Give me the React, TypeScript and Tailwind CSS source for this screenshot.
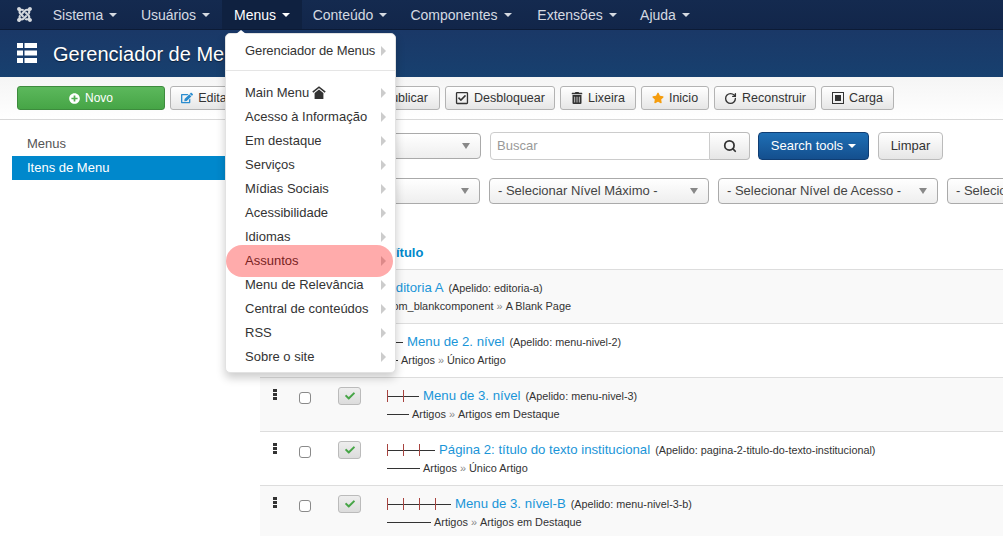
import type { ReactNode } from 'react'
import { FaJoomla, FaPlusCircle, FaRegCheckSquare, FaTrashAlt, FaStar, FaCheck, FaEdit } from 'react-icons/fa'
import { RotateCw, Search } from 'lucide-react'

const navItems = [
  { label: 'Sistema', w: 'w-[88px]' },
  { label: 'Usuários', w: 'w-[93px]' },
  { label: 'Menus', w: 'w-[80px]' },
  { label: 'Conteúdo', w: 'w-[96px]' },
  { label: 'Componentes', w: 'w-[126px]' },
  { label: 'Extensões', w: 'w-[106px]' },
  { label: 'Ajuda', w: 'w-[70px]' },
]

const menuItems = [
  'Acesso à Informação',
  'Em destaque',
  'Serviços',
  'Mídias Sociais',
  'Acessibilidade',
  'Idiomas',
  'Assuntos',
  'Menu de Relevância',
  'Central de conteúdos',
  'RSS',
  'Sobre o site',
]

const rows = [
  { pipes: 0, dash: 0, title: 'Editoria A', alias: 'editoria-a', type: ['com_blankcomponent', 'A Blank Page'], bg: 'bg-[#f9f9f9]' },
  { pipes: 1, dash: 11, title: 'Menu de 2. nível', alias: 'menu-nivel-2', type: ['Artigos', 'Único Artigo'], bg: 'bg-white' },
  { pipes: 2, dash: 22, title: 'Menu de 3. nível', alias: 'menu-nivel-3', type: ['Artigos', 'Artigos em Destaque'], bg: 'bg-[#f9f9f9]' },
  { pipes: 3, dash: 33, title: 'Página 2: título do texto institucional', alias: 'pagina-2-titulo-do-texto-institucional', type: ['Artigos', 'Único Artigo'], bg: 'bg-white' },
  { pipes: 4, dash: 44, title: 'Menu de 3. nível-B', alias: 'menu-nivel-3-b', type: ['Artigos', 'Artigos em Destaque'], bg: 'bg-[#f9f9f9]' },
]

function Caret({ className }: { className: string }) {
  return <span className={`inline-block w-0 h-0 border-x-[4px] border-x-transparent border-t-[4px] ${className}`} />
}

function MenuArrow() {
  return <span className="w-0 h-0 border-y-[5px] border-y-transparent border-l-[5px] border-l-[#ccc]" />
}

function ToolButton({ w, icon, label }: { w: string; icon: ReactNode; label: string }) {
  return (
    <button className={`${w} h-6 flex items-center justify-center gap-[5px] rounded-[3px] border border-[#b3b3b3] bg-gradient-to-b from-white to-[#e6e6e6] text-[12.5px] text-[#333]`}>
      {icon}
      {label}
    </button>
  )
}

function Select({ w, label }: { w: string; label: string }) {
  return (
    <div className={`${w} shrink-0 h-[26px] flex items-center justify-between pl-[8px] pr-[10px] rounded-[4px] border border-[#aaa] bg-gradient-to-b from-white to-[#eee] text-[13px] text-[#444] whitespace-nowrap overflow-hidden`}>
      <span>{label}</span>
      <span className="ml-2 w-0 h-0 border-x-[4px] border-x-transparent border-t-[6px] border-t-[#888]" />
    </div>
  )
}

function Level({ pipes }: { pipes: number }) {
  if (pipes === 0) return null
  return (
    <span className="inline-flex items-center h-[13px] mr-[4px]">
      {Array.from({ length: pipes }).map((_, i) => (
        <span key={i} className="flex items-center">
          <span className="w-px h-[12px] bg-[#a8433f]" />
          <span className="w-[15px] h-px bg-[#333]" />
        </span>
      ))}
    </span>
  )
}

export default function App() {
  return (
    <div className="relative w-[1003px] h-[536px] overflow-hidden bg-white font-['Liberation_Sans',sans-serif] text-[13px] text-[#333]">
      <nav className="h-[30px] flex items-center bg-gradient-to-b from-[#142a4f] to-[#12264a] border-b border-[#0c1b36] pl-[8px]">
        <div className="w-[32px] flex justify-center mr-[1px]">
          <FaJoomla className="text-[#d5d9de] text-[17px]" />
        </div>
        {navItems.map((item) => {
          const active = item.label === 'Menus'
          return (
            <div
              key={item.label}
              className={`${item.w} h-full pt-[1px] flex items-center justify-center gap-[6px] text-[14px] ${active ? 'bg-[#0f2140] text-white' : 'text-[#d5dae2]'}`}
            >
              {item.label}
              <Caret className={active ? 'border-t-white' : 'border-t-[#d5dae2]'} />
            </div>
          )
        })}
      </nav>

      <header className="h-[47px] flex items-center bg-gradient-to-b from-[#1a3867] to-[#17406f] pl-[17px]">
        <svg width="20" height="20" viewBox="0 0 20 20" className="mr-[16px] mb-[2px]" fill="#fff">
          <rect x="0" y="0" width="6" height="5" />
          <rect x="7.5" y="0" width="12.5" height="5" />
          <rect x="0" y="7.5" width="6" height="5" />
          <rect x="7.5" y="7.5" width="12.5" height="5" />
          <rect x="0" y="15" width="6" height="5" />
          <rect x="7.5" y="15" width="12.5" height="5" />
        </svg>
        <h1 className="text-[20px] text-white whitespace-nowrap [text-shadow:0_1px_1px_rgba(0,0,0,0.5)]">Gerenciador de Menus: Itens</h1>
      </header>

      <div className="h-[43px] flex items-center gap-[5px] pl-[17px] bg-gradient-to-b from-[#f5f5f5] to-white border-b border-[#d8d8d8]">
        <button className="w-[148px] h-6 flex items-center justify-center gap-[5px] rounded-[3px] border border-[#3d8b3d] bg-gradient-to-b from-[#5cb85c] to-[#46a546] text-[12px] text-white">
          <FaPlusCircle className="text-[11px]" /> Novo
        </button>
        <ToolButton w="w-[72px]" icon={<FaEdit className="text-[12px] text-[#2a8ccf]" />} label="Editar" />
        <ToolButton w="w-[82px]" icon={<FaCheck className="text-[11px]" />} label="Publicar" />
        <ToolButton w="w-[106px]" icon={<FaCheck className="text-[11px]" />} label="Despublicar" />
        <ToolButton w="w-[110px]" icon={<FaRegCheckSquare className="text-[14px]" />} label="Desbloquear" />
        <ToolButton w="w-[76px]" icon={<FaTrashAlt className="text-[12px]" />} label="Lixeira" />
        <ToolButton w="w-[68px]" icon={<FaStar className="text-[12px] text-[#f59d0e]" />} label="Inicio" />
        <ToolButton w="w-[102px]" icon={<RotateCw size={13} strokeWidth={2.5} />} label="Reconstruir" />
        <ToolButton
          w="w-[73px]"
          icon={
            <span className="w-3 h-3 border border-[#333] flex items-center justify-center">
              <span className="w-[6px] h-[6px] bg-[#333]" />
            </span>
          }
          label="Carga"
        />
      </div>

      <div className="flex">
        <aside className="w-[248px] pl-[12px] pt-[12px] shrink-0">
          <div className="h-6 flex items-center pl-[15px] text-[13px] text-[#555]">Menus</div>
          <div className="h-6 flex items-center pl-[15px] text-[13px] text-white bg-[#0088cc]">Itens de Menu</div>
        </aside>

        <main className="flex-1 min-w-0 pl-[12px]">
          <div className="flex items-center h-[28px] mt-[12px] ml-[61px]">
            <Select w="w-[160px]" label="" />
            <div className="ml-[9px] w-[220px] h-[28px] flex items-center px-[6px] rounded-l-[4px] border border-[#ccc] bg-white text-[13px] text-[#999]">Buscar</div>
            <div className="w-[40px] h-[28px] flex items-center justify-center rounded-r-[4px] border border-l-0 border-[#bbb] bg-gradient-to-b from-white to-[#e6e6e6]">
              <Search size={14} strokeWidth={3} className="text-[#333]" />
            </div>
            <button className="ml-[8px] w-[111px] h-[28px] flex items-center justify-center gap-[5px] rounded-[4px] border border-[#0f3d73] bg-gradient-to-b from-[#1f6fb5] to-[#144f8e] text-[13px] text-white">
              Search tools <Caret className="border-t-white" />
            </button>
            <button className="ml-[9px] w-[65px] h-[28px] rounded-[4px] border border-[#bbb] bg-gradient-to-b from-white to-[#e6e6e6] text-[13px] text-[#333]">Limpar</button>
          </div>

          <div className="flex items-center gap-[9px] mt-[18px] ml-[61px] whitespace-nowrap">
            <Select w="w-[159px]" label="" />
            <Select w="w-[220px]" label="- Selecionar Nível Máximo -" />
            <Select w="w-[220px]" label="- Selecionar Nível de Acesso -" />
            <Select w="w-[200px]" label="- Selecionar Idioma -" />
          </div>

          <div className="h-[65px] flex items-end pb-[7px] pl-[128px] text-[13px] font-bold text-[#0088cc]">Título</div>

          {rows.map((row) => (
            <div key={row.title} className={`h-[54px] flex border-t border-[#ddd] ${row.bg}`}>
              <div className="w-[39px] pl-[13px] pt-[11px]">
                <div className="w-[4px] flex flex-col gap-px">
                  <span className="h-[3px] bg-[#333]" />
                  <span className="h-[3px] bg-[#333]" />
                  <span className="h-[3px] bg-[#333]" />
                </div>
              </div>
              <div className="w-[39px] pt-[14px]">
                <span className="block w-[12px] h-[12px] rounded-[3px] border border-[#8a8a8a] bg-white" />
              </div>
              <div className="w-[49px] pt-[9px]">
                <span className="w-[23px] h-[18px] flex items-center justify-center rounded-[3px] border border-[#bbb] bg-gradient-to-b from-[#eee] to-[#dcdcdc]">
                  <FaCheck className="text-[10px] text-[#46a546]" />
                </span>
              </div>
              <div className="min-w-0 whitespace-nowrap">
                <div className="flex items-center h-[18px] mt-[9px]">
                  <Level pipes={row.pipes} />
                  <span className="text-[13.2px] text-[#1a95d8]">{row.title}</span>
                  <span className="ml-[5px] text-[10.8px] text-[#333]">(Apelido: {row.alias})</span>
                </div>
                <div className="flex items-center h-[14px] mt-[2px] text-[10.9px] text-[#333]">
                  {row.dash > 0 ? <span className="h-px bg-[#333] mr-[3px]" style={{ width: row.dash }} /> : null}
                  {row.type[0]} <span className="mx-[3px] text-[#888]">»</span> {row.type[1]}
                </div>
              </div>
            </div>
          ))}
        </main>
      </div>

      {/* dropdown aberto sobre a pagina */}
      <div className="absolute left-[225px] top-[33px] w-[171px] pt-[5px] pb-[3px] bg-white rounded-[5px] border border-[#e2e2e2] shadow-[0_5px_10px_rgba(0,0,0,0.2)]">
        <span className="absolute -top-[4px] left-[10px] w-0 h-0 border-x-[5px] border-x-transparent border-b-[4px] border-b-white" />
        <div className="h-6 flex items-center justify-between pl-[19px] pr-[9px] text-[13px] tracking-[-0.1px] text-[#333] whitespace-nowrap">
          Gerenciador de Menus
          <MenuArrow />
        </div>
        <div className="h-px mt-[7px] mb-[10px] bg-[#e5e5e5]" />
        <div className="h-6 flex items-center justify-between pl-[19px] pr-[9px] text-[13px] text-[#333]">
          <span className="flex items-center gap-[3px]">
            Main Menu
            <svg width="14" height="13" viewBox="0 0 14 13" className="mb-[2px]">
              <path d="M0.8 6.2 7 1.2 13.2 6.2" fill="none" stroke="#333" strokeWidth="1.6" />
              <path d="M2.6 7 7 3.5 11.4 7V13H2.6Z" fill="#333" />
            </svg>
          </span>
          <MenuArrow />
        </div>
        {menuItems.map((label) => (
          <div key={label} className="h-6 flex items-center justify-between pl-[19px] pr-[9px] text-[13px] text-[#333]">
            {label}
            <MenuArrow />
          </div>
        ))}
      </div>

      {/* realce vermelho por cima do item */}
      <div className="absolute left-[226px] top-[245px] w-[167px] h-[32px] rounded-[16px] bg-[#ff0000]/[0.33]" />
    </div>
  )
}
